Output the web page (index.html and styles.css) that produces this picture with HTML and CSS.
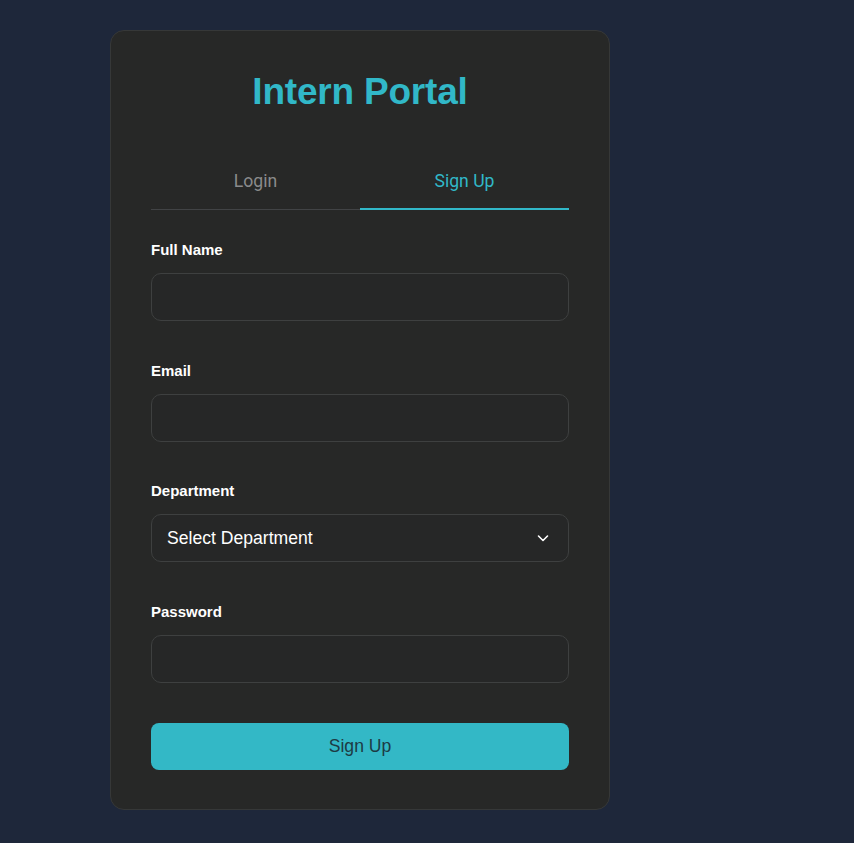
FILE: index.html
```html
<!DOCTYPE html>
<html lang="en">
<head>
<meta charset="utf-8">
<title>Intern Portal</title>
<link rel="stylesheet" href="styles.css">
</head>
<body>
<main class="page">
  <section class="card">
    <h1 class="title">Intern Portal</h1>
    <div class="tabs">
      <button class="tab">Login</button>
      <button class="tab tab-active">Sign Up</button>
    </div>
    <form class="form">
      <div class="field">
        <label class="label">Full Name</label>
        <input class="input" type="text">
      </div>
      <div class="field">
        <label class="label">Email</label>
        <input class="input" type="email">
      </div>
      <div class="field">
        <label class="label">Department</label>
        <div class="select">
          <span class="select-text">Select Department</span>
          <svg class="chevron" width="14" height="14" viewBox="0 0 14 14"><path d="M2.5 5 L7 9.5 L11.5 5" fill="none" stroke="#ffffff" stroke-width="1.6" stroke-linecap="round" stroke-linejoin="round"/></svg>
        </div>
      </div>
      <div class="field">
        <label class="label">Password</label>
        <input class="input" type="password">
      </div>
      <button class="submit" type="button">Sign Up</button>
    </form>
  </section>
</main>
</body>
</html>
```
FILE: styles.css
```css
* { box-sizing: border-box; }
html, body { margin: 0; padding: 0; }
body {
  background: #1e273a;
  font-family: "Liberation Sans", Arial, sans-serif;
  color: #ffffff;
  min-height: 843px;
}
.page {
  padding: 30px 0 0 110px;
}
.card {
  width: 500px;
  background: #272827;
  border: 1px solid #363838;
  border-radius: 14px;
  padding: 40px 40px 39px;
}
.title {
  margin: 0;
  text-align: center;
  color: #31b8c8;
  font-size: 37px;
  font-weight: 700;
  line-height: 42px;
  letter-spacing: -0.2px;
}
.tabs {
  display: flex;
  margin-top: 57px;
  border-bottom: 1px solid #414345;
}
.tab {
  flex: 1;
  background: none;
  border: none;
  font-family: Roboto, "Liberation Sans", sans-serif;
  font-size: 17.6px;
  color: #8a8b8c;
  padding: 0 0 16px;
  line-height: 22px;
  margin-bottom: -1px;
  border-bottom: 2px solid transparent;
}
.tab-active {
  color: #31b8c8;
  border-bottom-color: #31b8c8;
}
.form {
  display: flex;
  flex-direction: column;
  padding-top: 31px;
}
.field {
  display: flex;
  flex-direction: column;
  gap: 14px;
  margin-bottom: 40.67px;
}
.field:last-of-type {
  margin-bottom: 40px;
}
.label {
  font-size: 15px;
  font-weight: 700;
  line-height: 18px;
  color: #ffffff;
}
.input, .select {
  height: 48px;
  width: 100%;
  background: #262727;
  border: 1px solid #3e4040;
  border-radius: 10px;
  color: #ffffff;
  font-size: 17.6px;
  padding: 0 15px;
}
.select {
  display: flex;
  align-items: center;
  justify-content: space-between;
}
.select-text {
  font-size: 17.6px;
}
.chevron {
  margin-right: 3px;
}
.submit {
  height: 47px;
  background: #33b8c6;
  border: none;
  border-radius: 8px;
  font-family: "Liberation Sans", Arial, sans-serif;
  font-size: 17.6px;
  color: #1d3b44;
}
```
